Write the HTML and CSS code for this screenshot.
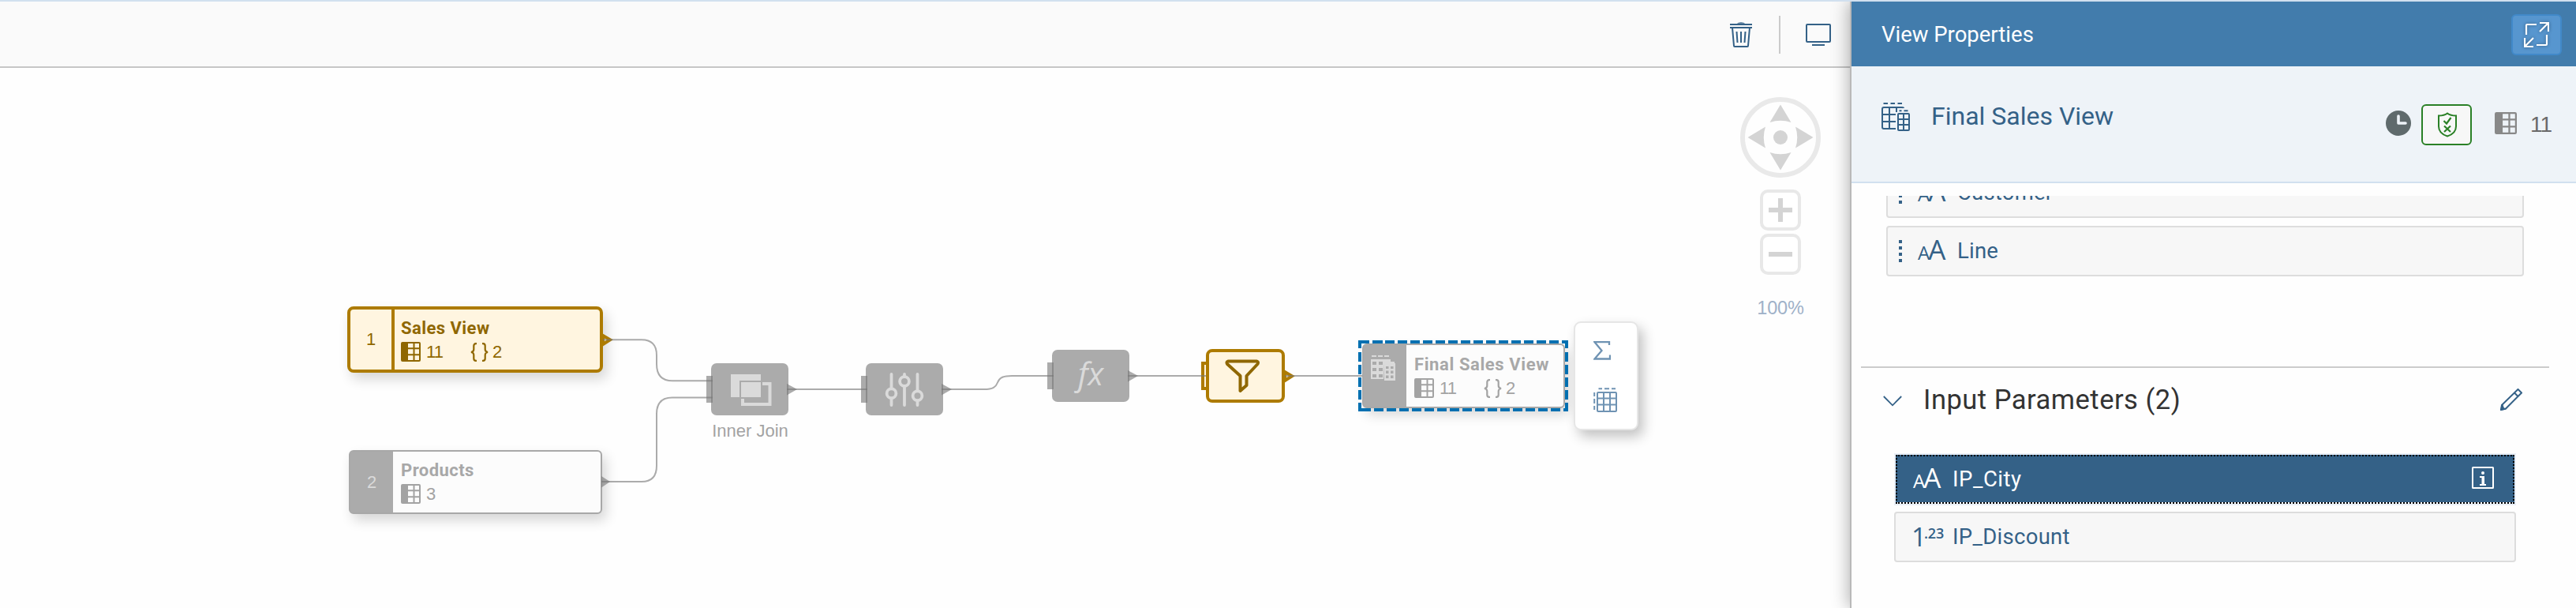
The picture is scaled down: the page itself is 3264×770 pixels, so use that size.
FILE: index.html
```html
<!DOCTYPE html>
<html lang="en">
<head>
<meta charset="utf-8">
<title>View Properties</title>
<link rel="stylesheet" href="styles.css">
</head>
<body>
<svg class="sprite" aria-hidden="true">
  <symbol id="columns" viewBox="0 0 25 25">
    <rect x="1" y="1" width="23" height="23" rx="1" fill="none" stroke="currentColor" stroke-width="2"/>
    <path d="M1 1H9V24H1Z" fill="currentColor"/>
    <path d="M9 8.3H24M9 16.3H24M16.5 1V24" stroke="currentColor" stroke-width="2"/>
  </symbol>
  <symbol id="braces" viewBox="0 0 23 24">
    <path d="M8 1.2H7Q4.300 1.200 4.300 4V8.500Q4.300 11.300 1 12Q4.300 12.700 4.300 15.500V20Q4.300 22.800 7 22.800H8M15 1.200H16Q18.700 1.200 18.700 4V8.500Q18.700 11.300 22 12Q18.700 12.700 18.700 15.500V20Q18.700 22.800 16 22.800H15" fill="none" stroke="currentColor" stroke-width="2.200"/>
  </symbol>
  <symbol id="view" viewBox="0 0 36 36">
    <path d="M2.500 1H8M11.500 1H17M20.500 1H26M22.500 10.200H25.500M28.500 10.200H33.500" stroke="currentColor" stroke-width="2"/>
    <path d="M28 7Q28 6 26 6H3Q1 6 1 8V31Q1 33 3 33H18M10 6V33M19 6V12M1 15H18M1 24H18" fill="none" stroke="currentColor" stroke-width="2"/>
    <rect x="21" y="14" width="14" height="21" rx="1" fill="none" stroke="currentColor" stroke-width="2"/>
    <path d="M28 14V35M21 21H35M21 28H35" stroke="currentColor" stroke-width="2"/>
  </symbol>
</svg>
<div class="app">
  <main class="editor">
    <div class="toolbar">
      <svg class="trash" viewBox="0 0 28 32"><path d="M9 1.800Q10 .2 14 .2T19 1.800Z" fill="currentColor"/><path d="M0 3H28M0 7H28" stroke="currentColor" stroke-width="2"/><path d="M3 7L5 30Q5 31 6 31H22Q23 31 23 30L25 7M8.500 12L9.500 26M14 12V26M19.500 12L18.500 26" fill="none" stroke="currentColor" stroke-width="2"/></svg>
      <span class="separator"></span>
      <svg class="monitor" viewBox="0 0 32 28"><rect x="1" y="1" width="30" height="22" rx="1" fill="none" stroke="currentColor" stroke-width="2"/><path d="M8 27H24" stroke="currentColor" stroke-width="2"/></svg>
    </div>
    <div class="canvas">
      <svg class="links" viewBox="0 86 2344 684">
        <g class="port">
          <path d="M762 603L773 610L762 617.500Z"/>
          <rect x="895" y="476" width="8" height="34"/><path d="M997 486L1010 493L997 500.500Z"/>
          <rect x="1091" y="476" width="8" height="34"/><path d="M1193 486L1206 493L1193 500.500Z"/>
          <rect x="1327" y="459" width="8" height="34"/><path d="M1429 469L1442 476L1429 483.500Z"/>
        </g>
        <g class="port-active">
          <path d="M764 425L773 430.300L764 436Z"/>
          <rect x="1524" y="460" width="6" height="32"/><path d="M1628 471L1637 476.300L1628 482Z"/>
        </g>
        <g class="link">
          <path d="M764 430.300H813Q832 430.300 832 450V461Q832 482.300 852 482.300H903"/>
          <path d="M762 610H813Q832 610 832 590V524Q832 503.600 852 503.600H903"/>
          <path d="M997 493H1099"/>
          <path d="M1193 493H1247C1258 493 1262 490 1264 484.500C1266 479 1270 476 1282 476H1335"/>
          <path d="M1429 476H1530M1626 476H1726"/>
        </g>
      </svg>

      <div class="source source-active n-sales">
        <div class="ordinal">1</div>
        <div class="details"><div class="name">Sales View</div>
          <div class="counts"><svg class="i-columns"><use href="#columns"/></svg><span class="count">11</span><svg class="i-braces"><use href="#braces"/></svg><span>2</span></div></div>
      </div>
      <div class="source n-products">
        <div class="ordinal">2</div>
        <div class="details"><div class="name">Products</div>
          <div class="counts"><svg class="i-columns"><use href="#columns"/></svg><span class="count">3</span></div></div>
      </div>
      <div class="source n-final">
        <div class="ordinal"><svg class="i-view"><path d="M1 5H26V13H19V30H1Z" fill="#dadada"/><path d="M2 1H8M10 1H16M18 1H24M19 9H24M26 9H31" stroke="#dadada" stroke-width="2"/><path d="M18 10H32V32H17Z" fill="#ababab"/><path d="M18 10H32V32H18Z" fill="#dadada"/><path d="M3 8H8V12H3ZM11 8H16V12H11ZM3 16H8V20H3ZM11 16H16V20H11ZM3 24H8V28H3ZM11 24H16V28H11ZM20 14H23.500V17H20ZM26 14H29.500V17H26ZM20 19.500H23.500V23H20ZM26 19.500H29.500V23H26ZM20 25.500H23.500V29H20ZM26 25.500H29.500V29H26Z" fill="#ababab"/></svg></div>
        <div class="details"><div class="name">Final Sales View</div>
          <div class="counts"><svg class="i-columns"><use href="#columns"/></svg><span class="count">11</span><svg class="i-braces"><use href="#braces"/></svg><span>2</span></div></div>
      </div>
      <svg class="selection" viewBox="0 0 266 90"><path d="M0 2H266" stroke-dasharray="14 4 13 3 12 4 12 4 12 4 12 4 12 4 12 4 12 4 12 4 12 4 12 4 12 4 12 4 12 4 12 4 12 4"/><path d="M264 0V90M2 0V90" stroke-dasharray="10 5 12 4 12 4 12 4 12 4 12 4 12 4"/><path d="M266 88H0" stroke-dasharray="6 4 12 4 12 4 12 4 12 4 12 4 12 4 12 4 12 4 12 4 12 4 12 4 12 4 12 4 12 4 12 4 12 4"/></svg>

      <div class="op n-join"><svg viewBox="0 0 98 66"><path d="M25 14H63V22H36V43H25Z" fill="#dadada"/><path d="M38 24H63V43H38Z" fill="#dadada"/><path d="M65 26H74.500V52H40V45" fill="none" stroke="#dadada" stroke-width="4"/></svg></div>
      <div class="op-label">Inner Join</div>
      <div class="op n-project"><svg viewBox="0 0 98 66"><g fill="#ababab" stroke="#dadada" stroke-width="3.800" stroke-linecap="round"><path d="M32.500 14V53M49 14V53M65.500 14V53"/><circle cx="32.500" cy="38.300" r="5.900"/><circle cx="49" cy="23" r="5.900"/><circle cx="65.500" cy="41.300" r="5.900"/></g></svg></div>
      <div class="op n-calc"><span class="fx">fx</span></div>
      <div class="op op-active n-filter"><svg viewBox="0 0 92 60"><path d="M24 11.500H60.500Q63 12.500 61.500 15L47.500 30V42L39.500 49V30L23 15Q21.500 12.500 24 11.500Z" fill="none" stroke="#8f6700" stroke-width="4" stroke-linejoin="round"/></svg></div>

      <div class="context">
        <svg class="sigma" viewBox="0 0 22 24"><path d="M20 5V1.200H1.500L10.500 12L1.500 22.500H21V17.500" fill="none" stroke="currentColor" stroke-width="2.300"/></svg>
        <svg class="grid" viewBox="0 0 30 31"><path d="M6.500 1.200H11M14 1.200H20M23 1.200H28M1.200 6V11M1.200 14V20M1.200 23V28" stroke="currentColor" stroke-width="2"/><rect x="5" y="6" width="24" height="24" rx="1" fill="none" stroke="currentColor" stroke-width="2"/><path d="M13 6V30M21 6V30M5 13.500H29M5 21.500H29" stroke="currentColor" stroke-width="2"/></svg>
      </div>

      <div class="navigator">
        <svg class="pan" viewBox="0 0 102 102"><circle cx="51" cy="51" r="48" fill="none" stroke="#e9e9e9" stroke-width="6"/><g fill="#d4d4d4"><circle cx="51" cy="51" r="9"/><path d="M51 9.500L64.500 32Q51 27.500 37.500 32Z"/><path d="M51 92.500L64.500 70Q51 74.500 37.500 70Z"/><path d="M9.500 51L32 37.500Q27.500 51 32 64.500Z"/><path d="M92.500 51L70 37.500Q74.500 51 70 64.500Z"/></g></svg>
        <svg class="zoom zoom-in" viewBox="0 0 52 52"><rect x="2" y="2" width="48" height="48" rx="8"/><path d="M11 26H41M26 11V41"/></svg>
        <svg class="zoom" viewBox="0 0 52 52"><rect x="2" y="2" width="48" height="48" rx="8"/><path d="M11 26H41"/></svg>
        <span class="percent">100%</span>
      </div>
    </div>
  </main>

  <aside class="panel">
    <header class="panel-head">
      <span>View Properties</span>
      <button class="expand"><svg viewBox="0 0 32 32"><g fill="none" stroke="#fff" stroke-width="2.200"><path d="M3 16V4Q3 3 4 3H16M29 16V28Q29 29 28 29H16"/><path d="M20 1H31V12M31 1L20 12M12 31H1V20M1 31L12 20"/></g></svg></button>
    </header>
    <div class="summary">
      <svg class="i-panel-view"><use href="#view"/></svg>
      <h1>Final Sales View</h1>
      <div class="status">
        <svg class="clock" viewBox="0 0 32 32"><circle cx="16" cy="16" r="16" fill="#5f6a6c"/><path d="M16 7V16H25" fill="none" stroke="#eef3f8" stroke-width="3.600" stroke-linecap="round" stroke-linejoin="round"/></svg>
        <span class="validated"><svg viewBox="0 0 24 32"><g fill="none" stroke="#2a8026" stroke-width="2"><path d="M12 1.500Q8 4.500 1 4.500V18Q1 27 12 30.500Q23 27 23 18V4.500Q16 4.500 12 1.500Z"/><path d="M7.500 11L11 14.500L16.500 7M8 17.500L16 25M16 17.500L8 25" stroke-width="2.200"/></g></svg></span>
        <svg class="i-columns-lg"><use href="#columns"/></svg>
        <span class="total">11</span>
      </div>
    </div>
    <div class="panel-body">
      <div class="attributes">
        <div class="row"><span class="grip"></span><span class="type"><small>A</small>A</span><span>Customer</span></div>
        <div class="row"><span class="grip"></span><span class="type"><small>A</small>A</span><span>Line</span></div>
      </div>
      <section class="params">
        <div class="params-head">
          <svg class="chevron" viewBox="0 0 24 14"><path d="M.8 1L12 12.300L23.200 1" fill="none" stroke="currentColor" stroke-width="1.800"/></svg>
          <h2>Input Parameters (2)</h2>
          <svg class="pencil" viewBox="0 0 28 28"><path d="M2 21L22.500 1L27 5.500L7 25.500L1 27ZM18 5.500L22.500 10" fill="none" stroke="currentColor" stroke-width="2"/><path d="M1.500 20.500L0 28L7.500 26.500Q4 25 3.500 20Z" fill="currentColor"/></svg>
        </div>
        <div class="row row-selected"><div class="focus"><span class="type"><small>A</small>A</span><span>IP_City</span><svg class="info" viewBox="0 0 28 28"><rect x="1" y="1" width="26" height="26" rx=".5" fill="none" stroke="#fff" stroke-width="2"/><circle cx="14" cy="8" r="2" fill="#fff"/><path d="M10 12H16V22H18V24H10V22H12.500V14H10Z" fill="#fff"/></svg></div></div>
        <div class="row row-plain"><span class="number">1<sup>.23</sup></span><span>IP_Discount</span></div>
      </section>
    </div>
  </aside>
</div>
</body>
</html>
```

FILE: styles.css
```css
* { box-sizing: border-box; }
body { margin: 0; background: #fefefe; font-family: Roboto, "Open Sans", sans-serif; overflow: hidden; }
svg { display: block; flex: none; }
.sprite { position: absolute; width: 0; height: 0; }
.app { display: flex; width: 3264px; height: 770px; border-top: 2px solid #d1e0ef; }

/* editor */
.editor { width: 2344px; display: flex; flex-direction: column; }
.toolbar { height: 84px; display: flex; align-items: center; justify-content: flex-end; padding: 0 24px 0 0; background: #fafafa; border-bottom: 2px solid #c6c6c6; color: #346187; }
.trash { width: 28px; height: 32px; margin-top: 2px; }
.separator { width: 2px; height: 48px; margin: 2px 32px 0 34px; background: #cacaca; }
.monitor { width: 32px; height: 28px; margin-top: 2px; }
.canvas { position: relative; flex: 1; }
.links { position: absolute; inset: 0; width: 2344px; height: 684px; z-index: 2; }
.link { fill: none; stroke: #777; stroke-opacity: .62; stroke-width: 2; }
.port { fill: #777; fill-opacity: .62; }
.port-active { fill: #fff5e0; stroke: #ad7b00; stroke-width: 4; }

/* diagram nodes */
.source { position: absolute; display: flex; border: 2px solid #a8a8a8; border-radius: 6px; background: #fcfcfc; color: #a8a8a8; box-shadow: 5px 8px 16px rgba(0,0,0,.16); }
.ordinal { display: flex; align-items: center; justify-content: center; width: 54px; background: #ababab; color: #dadada; font: 22px "Liberation Sans", sans-serif; }
.details { padding: 10px 0 0 10px; }
.name { height: 31px; font-weight: 700; font-size: 22px; line-height: 27px; letter-spacing: .45px; white-space: nowrap; }
.counts { display: flex; align-items: center; height: 25px; font: 22px/27px "Liberation Sans", sans-serif; color: #a3a3a3; }
.i-columns { width: 25px; height: 25px; margin-right: 7px; }
.count { width: 56px; letter-spacing: -.8px; }
.i-braces { width: 23px; height: 24px; margin-right: 5px; }
.source-active { border: 4px solid #ad7b00; border-radius: 8px; background: #fff5e0; color: #8f6700; }
.source-active .ordinal { width: 56px; background: none; border-right: 4px solid #ad7b00; color: #8f6700; }
.source-active .details { padding: 10px 0 0 8px; }
.source-active .counts { color: #8f6700; }
.n-sales { left: 440px; top: 302px; width: 324px; height: 84px; }
.n-products { left: 442px; top: 484px; width: 321px; height: 81px; }
.n-final { left: 1726px; top: 349px; width: 257px; height: 82px; }
.n-final .ordinal { align-items: flex-start; padding: 13px 0 0 0; }
.i-view { width: 32px; height: 32px; margin-right: 6px; }
.n-final .details { padding-top: 11px; }
.n-final .name { letter-spacing: .6px; }
.selection { position: absolute; left: 1721px; top: 345px; width: 266px; height: 90px; fill: none; stroke: #0070b1; stroke-width: 4; }
.op { position: absolute; display: flex; align-items: center; justify-content: center; width: 98px; height: 66px; border-radius: 7px; background: #ababab; z-index: 1; }
.op svg { width: 98px; height: 66px; }
.n-join { left: 901px; top: 374px; }
.n-project { left: 1097px; top: 374px; }
.n-calc { left: 1333px; top: 357px; }
.op-active { width: 100px; height: 68px; border: 4px solid #ad7b00; border-radius: 8px; background: #fff5e0; z-index: 3; }
.op-active svg { width: 92px; height: 60px; }
.n-filter { left: 1528px; top: 356px; }
.op-label { position: absolute; left: 901px; top: 447px; width: 99px; text-align: center; white-space: nowrap; font: 22px/26px "Liberation Sans", sans-serif; color: #a3a3a3; }
.fx { font: italic 500 41px/60px "Open Sans", sans-serif; color: #dadada; padding-bottom: 9px; }
.context { position: absolute; left: 1994px; top: 321px; width: 82px; height: 138px; padding: 23px 0 0 23px; border: 2px solid #e6e6e6; border-radius: 9px; background: #fff; color: #6f93b3; box-shadow: 6px 8px 16px rgba(0,0,0,.24); }
.sigma { width: 22px; height: 24px; }
.grid { width: 30px; height: 31px; margin-top: 35px; }
.navigator { position: absolute; left: 2205px; top: 37px; width: 102px; display: flex; flex-direction: column; align-items: center; }
.pan { width: 102px; height: 102px; }
.zoom { width: 52px; height: 52px; fill: #fff; stroke: #e8e8e8; stroke-width: 4; }
.zoom path { stroke: #d4d4d4; stroke-width: 6; }
.zoom-in { margin: 15px 0 4px; }
.percent { margin-top: 28px; font: 23.500px/28px "Liberation Sans", sans-serif; letter-spacing: -.2px; color: #9fb1c8; }

/* properties panel */
.panel { position: relative; z-index: 5; width: 920px; border-left: 2px solid #b9b9b9; background: #fefefe; box-shadow: -2px 0 20px rgba(0,0,0,.3); clip-path: inset(0 0 0 -40px); color: #346187; font-size: 27.500px; display: flex; flex-direction: column; }
.panel-head { height: 82px; display: flex; align-items: center; justify-content: space-between; padding: 0 18px 0 38px; background: #427cac; color: #fff; }
.expand { width: 64px; height: 52px; margin-top: 2px; padding: 0; display: flex; align-items: center; justify-content: center; border: 2px solid #4189c9; border-radius: 6px; background: #5796cf; }
.expand svg { width: 32px; height: 32px; filter: drop-shadow(0 0 2px rgba(0,0,0,.4)); }
.summary { height: 148px; display: flex; padding: 46px 31px 0 38px; background: #eef3f8; border-bottom: 2px solid #d1e0ef; }
.i-panel-view { width: 36px; height: 36px; }
.summary h1 { margin: -3px 0 0 27px; font-weight: 400; font-size: 32px; line-height: 40px; }
.status { display: flex; align-items: center; height: 52px; margin: 2px 0 0 auto; }
.clock { width: 32px; height: 32px; margin: -4px 13px 0 0; }
.validated { width: 64px; height: 52px; display: flex; align-items: center; justify-content: center; border: 2px solid #2a8026; border-radius: 6px; background: #f7f7f7; }
.validated svg { width: 24px; height: 32px; margin-left: 2px; }
.i-columns-lg { width: 28px; height: 28px; margin: -4px 17px 0 29px; color: #888; }
.total { font: 28px/32px "Liberation Sans", sans-serif; letter-spacing: -1px; color: #6a6a6a; margin-top: -1px; }
.panel-body { flex: 1; margin-top: 16px; overflow: hidden; padding: 0 34px 0 12px; }
.attributes { display: flex; flex-direction: column; gap: 10px; margin: -36px 32px 0; }
.row { display: flex; align-items: center; height: 64px; border: 2px solid #ddd; border-radius: 4px; background: #f7f7f7; padding: 0 24px 0 14px; line-height: 34px; letter-spacing: .2px; }
.grip { width: 4px; height: 28px; margin-right: 20px; background: repeating-linear-gradient(#346187 0 4px, transparent 4px 8px); }
.type { width: 50px; display: flex; align-items: baseline; font: 35px/40px "Open Sans", sans-serif; letter-spacing: -1px; }
.type small { font-size: 24px; letter-spacing: -2px; }
.params { margin-top: 114px; border-top: 2px solid #ccc; }
.params-head { display: flex; align-items: center; height: 80px; padding: 0 34px 0 28px; }
.chevron { width: 24px; height: 14px; margin-top: 4px; }
.params-head h2 { margin: 0 auto 0 27px; font-weight: 400; font-size: 34.500px; line-height: 40px; letter-spacing: .5px; color: #333; }
.pencil { width: 28px; height: 28px; }
.row-selected, .row-plain { margin: 0 42px; letter-spacing: .55px; }
.row-selected { height: 66px; margin-top: 28px; padding: 0; border-color: #e9eff7; border-radius: 0; color: #fff; background: #fff; }
.focus { flex: 1; height: 62px; display: flex; align-items: center; padding: 0 24px 0 20px; border: 2px dotted #000; background: linear-gradient(#346187, #346187) 0 0 / 100% 60px no-repeat border-box; }
.info { width: 28px; height: 28px; margin: -4px 0 0 auto; }
.row-plain { margin-top: 8px; padding-left: 20px; letter-spacing: .3px; }
.number { width: 52px; font: 33px/40px "Open Sans", sans-serif; letter-spacing: 0; white-space: nowrap; }
.number sup { font-size: 18px; line-height: 1; font-weight: 600; vertical-align: 10px; margin-left: -3px; }
```
